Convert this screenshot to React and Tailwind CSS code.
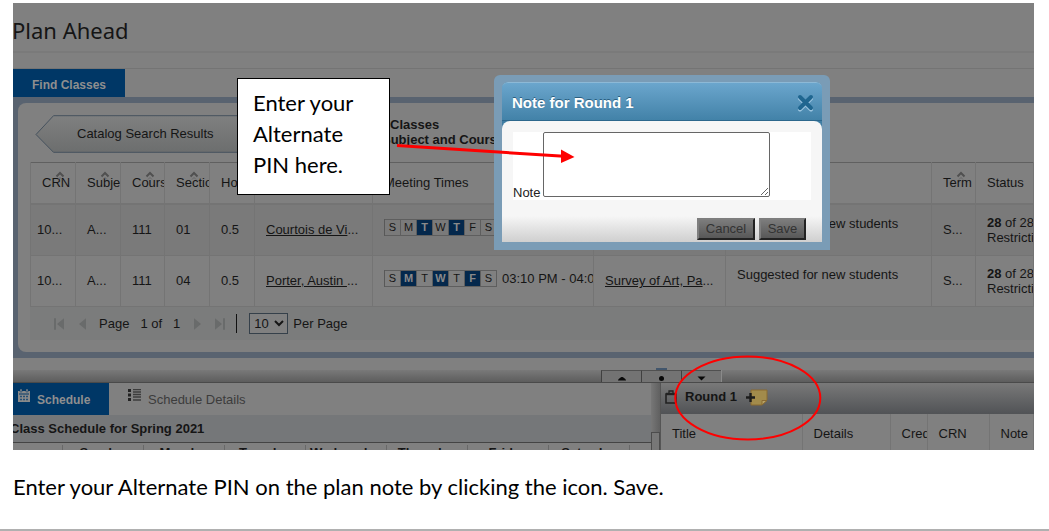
import React from "react";

const COLUMNS = [
  { name: "CRN", sort: true },
  { name: "Subject", sort: true },
  { name: "Course", sort: true },
  { name: "Section", sort: true },
  { name: "Hours" },
  { name: "Instructor" },
  { name: "Meeting Times" },
  { name: "Title" },
  { name: "Attribute" },
  { name: "Term", sort: true },
  { name: "Status" },
];

const CLASSES = [
  { section: "01", who: "Courtois de Vi", days: [2, 4], time: "", title: "Survey of Art, Pa" },
  { section: "04", who: "Porter, Austin ", days: [1, 3, 5], time: "03:10 PM - 04:00 PM", title: "Survey of Art, Pa" },
];

const WEEK = ["Sunday", "Monday", "Tuesday", "Wednesday", "Thursday", "Friday", "Saturday"];

function Caret() {
  return (
    <svg className="absolute left-6 top-2 h-[9px] w-[10px]" viewBox="0 0 10 9" fill="none" stroke="#505050" strokeWidth="2" aria-hidden="true">
      <path d="M1.500 5.500 5 2 8.500 5.500" />
      <path d="M3 8.500 5 6.500 7 8.500" stroke="#666" strokeWidth="1" />
    </svg>
  );
}

function Days({ active }) {
  return (
    <span className="inline-flex h-[17px] shrink-0 border-l border-[#585858] text-[11px] leading-[15px]">
      {["S", "M", "T", "W", "T", "F", "S"].map((d, i) => (
        <span
          key={i}
          className={
            active.includes(i)
              ? "w-4 border-y border-r border-[#5e5e5e] bg-[#04284c] text-center font-bold text-[#8a8a8a]"
              : "w-4 border-y border-r border-[#5e5e5e] text-center"
          }
        >
          {d}
        </span>
      ))}
    </span>
  );
}

function PagerButton({ label, children }) {
  return (
    <button type="button" aria-label={label} className="flex h-4 w-3 items-center justify-center">
      <svg className="h-[14px] w-3" viewBox="0 0 12 12" preserveAspectRatio="none" fill="#696b6b" aria-hidden="true">{children}</svg>
    </button>
  );
}

function Search() {
  return (
    <section className="bg-[#596370] py-[6px] pl-[5px]">
      <div className="rounded-l-lg bg-[#808080] pb-3 pl-3 pt-3">
        <div className="flex h-[47px] items-start">
          <button type="button" className="relative ml-[5px] flex h-[38px] w-[218px] items-center pl-[42px]">
            <svg className="absolute inset-0 h-full w-full" viewBox="0 0 218 38" aria-hidden="true">
              <defs>
                <linearGradient id="back" x1="0" y1="0" x2="0" y2="1">
                  <stop offset="0" stopColor="#7f8080" />
                  <stop offset="1" stopColor="#6c6e6e" />
                </linearGradient>
              </defs>
              <path d="M1 19.500 18.500.7H217V37.300H18.500z" fill="url(#back)" stroke="#46525e" />
            </svg>
            <span className="relative">Catalog Search Results</span>
          </button>
          <p className="ml-[129px] mt-[2px] whitespace-nowrap font-bold leading-[15px]">
            <span className="pl-2">Classes</span>
            <br />
            Subject and Course
          </p>
        </div>
        <table className="w-full table-fixed border-collapse whitespace-nowrap border-t border-[#606060]">
          <colgroup>
            <col className="w-[45px]" />
            <col className="w-[45px]" />
            <col className="w-[44px]" />
            <col className="w-[45px]" />
            <col className="w-[45px]" />
            <col className="w-[118px]" />
            <col className="w-[221px]" />
            <col className="w-[132px]" />
            <col className="w-[206px]" />
            <col className="w-[44px]" />
            <col />
          </colgroup>
          <thead>
            <tr className="h-[41px] border-b-2 border-[#747474]">
              {COLUMNS.map((c) => (
                <th key={c.name} className="overflow-hidden border-x border-[#747474] p-0 text-left font-normal">
                  <div className="relative flex h-[39px] items-center overflow-hidden pl-[11px]">
                    {c.name}
                    {c.sort && <Caret />}
                  </div>
                </th>
              ))}
            </tr>
          </thead>
          <tbody>
            {CLASSES.map((c, i) => (
              <tr
                key={c.section}
                className={
                  i === 0
                    ? "h-[52px] border-b border-[#747474] bg-[#7a7a7a] *:border-x *:border-[#747474] *:p-0 *:pl-[11px]"
                    : "h-[51px] border-b border-[#747474] *:border-x *:border-[#747474] *:p-0 *:pl-[11px]"
                }
              >
                <td><span className="-ml-[5px]">10...</span></td>
                <td>A...</td>
                <td>111</td>
                <td>{c.section}</td>
                <td>0.5</td>
                <td><a href="#instructor" className="underline">{c.who}</a>...</td>
                <td className="align-top">
                  <div className="flex gap-[5px] overflow-hidden pt-[14px] leading-[17px]">
                    <Days active={c.days} />
                    <span>{c.time}</span>
                  </div>
                </td>
                <td><a href="#course" className="underline">{c.title}</a>...</td>
                <td className="align-top leading-[15px]">
                  <div className="pt-[11px]">Suggested for new students</div>
                </td>
                <td>S...</td>
                <td className="overflow-hidden leading-[15px]">
                  <b>28</b> of 28 seats<br />Restrictions apply
                </td>
              </tr>
            ))}
          </tbody>
        </table>
        <div className="flex h-[33px] items-center bg-[#7b7c7c] pl-[23px]">
          <PagerButton label="First page"><path d="M1 1h2v10H1zM11 1v10L4 6z" /></PagerButton>
          <span className="w-3" />
          <PagerButton label="Previous page"><path d="M9 1v10L2 6z" /></PagerButton>
          <span className="ml-[10px]">Page</span>
          <span className="ml-[11px]">1 of</span>
          <span className="ml-[11px]">1</span>
          <span className="w-3" />
          <PagerButton label="Next page"><path d="M2 1v10l7-5z" /></PagerButton>
          <span className="w-[10px]" />
          <PagerButton label="Last page"><path d="M1 1v10l7-5zM9 1h2v10H9z" /></PagerButton>
          <span className="ml-[10px] h-[19px] w-px bg-[#111]" />
          <select id="per-page" defaultValue="10" className="ml-3 h-[21px] w-[39px] border border-[#35404a] bg-[#808080]">
            <option>10</option>
            <option>20</option>
          </select>
          <label htmlFor="per-page" className="ml-[5px]">Per Page</label>
        </div>
      </div>
    </section>
  );
}

function SplitButton({ label, children }) {
  return (
    <button type="button" aria-label={label} className="h-3 w-10 overflow-hidden border-l border-t border-l-[#404040] border-t-[#505050] bg-[#737373]">
      <svg className="mx-auto h-3 w-10" viewBox="0 0 40 12" fill="#080808" aria-hidden="true">{children}</svg>
    </button>
  );
}

function Splitter() {
  return (
    <div className="flex h-[13px] border-b border-[#4a4a4a] bg-linear-to-b from-[#797979] to-[#5d5d5d]">
      <div className="ml-[588px] flex border-r border-[#8a8a8a]">
        <SplitButton label="Collapse up"><path d="M16 9.500c0-1.500 3-3.500 4-3.500s4 2 4 3.500z" /></SplitButton>
        <SplitButton label="Reset split"><circle cx="19.500" cy="7.500" r="2.500" /></SplitButton>
        <SplitButton label="Collapse down"><path d="M15.500 5.500h8L19.500 9.500z" /></SplitButton>
      </div>
    </div>
  );
}

function Schedule() {
  return (
    <section className="w-[638px] shrink-0">
      <div className="flex h-8">
        <button type="button" className="flex w-24 bg-[#003766] pl-[5px] pt-[6px] text-[12px] font-bold text-[#8f8f8f]">
          <svg className="h-[13px] w-3" viewBox="0 0 12 13" aria-hidden="true">
            <path d="M0 2h12v11H0z" fill="#8a8a8a" />
            <path d="M2 0h2v3H2zM8 0h2v3H8z" fill="#8a8a8a" stroke="#003766" strokeWidth=".5" />
            <path d="M1 5h10" stroke="#003766" />
            <path d="M2 7.500h2M5 7.500h2M8 7.500h2M2 10.500h2M5 10.500h2M8 10.500h2" stroke="#254f76" strokeWidth="1.500" />
          </svg>
          <span className="ml-[7px] mt-[3px]">Schedule</span>
        </button>
        <button type="button" className="flex pl-[19px] pt-[6px] text-[#3c3c3c]">
          <svg className="h-3 w-[13px]" viewBox="0 0 13 12" aria-hidden="true">
            <path d="M0 0h3v3H0zM0 4.500h3v3H0zM0 9h3v3H0z" fill="#222" />
            <path d="M5 .5h8M5 3h8M5 5.500h8M5 8h8M5 11h8" stroke="#3c3c3c" strokeWidth="1.300" />
          </svg>
          <span className="ml-[7px] mt-[3px]">Schedule Details</span>
        </button>
      </div>
      <h2 className="-ml-[3px] flex h-7 items-center border-b border-[#444] bg-[#757779] font-bold">
        Class Schedule for Spring 2021
      </h2>
      <div className="mt-[2px] flex h-[5px] overflow-hidden text-center font-bold leading-[15px]">
        <span className="w-[49px] shrink-0" />
        {WEEK.map((d) => (
          <span key={d} className="w-[81px] shrink-0 border-l border-[#686868]">{d}</span>
        ))}
        <span className="w-4 border-l border-[#686868]" />
      </div>
    </section>
  );
}

function Plan() {
  return (
    <section className="min-w-0 flex-1">
      <div className="flex h-[31px] items-center bg-linear-to-b from-[#797979] to-[#515356] pb-[3px] pl-1">
        <svg className="h-[14px] w-3" viewBox="0 0 12 14" fill="none" stroke="#222" aria-hidden="true">
          <path d="M1 4h10v9H1z" strokeWidth="1.600" />
          <path d="M1 4h10" strokeWidth="2.400" />
          <path d="M4 3V1h4v2" strokeWidth="1.300" />
        </svg>
        <h2 className="ml-2 font-bold">Round 1</h2>
        <button type="button" aria-label="Add note" className="ml-[9px]">
          <svg className="h-[17px] w-[22px]" viewBox="0 0 22 17" aria-hidden="true">
            <path d="M5 1h16v10l-5 5H5z" fill="#a28b4b" stroke="#8a6a31" />
            <path d="M16 16v-4.500h5z" fill="#b7a266" stroke="#8a6a31" />
            <path d="M4.500 4v9M0 8.500h9" stroke="#1c1c1c" strokeWidth="2.400" />
          </svg>
        </button>
      </div>
      <div className="h-9 overflow-hidden">
        <table className="h-10 w-full table-fixed whitespace-nowrap text-left">
          <colgroup>
            <col className="w-[141px]" />
            <col className="w-[88px]" />
            <col className="w-[37px]" />
            <col className="w-[62px]" />
            <col />
          </colgroup>
          <thead>
            <tr className="*:overflow-hidden *:border-r *:border-[#747474] *:p-0 *:pl-[11px] *:font-normal">
              <th>Title</th>
              <th>Details</th>
              <th>Credits</th>
              <th>CRN</th>
              <th>Note</th>
            </tr>
          </thead>
        </table>
      </div>
    </section>
  );
}

function NoteDialog() {
  return (
    <div role="dialog" aria-labelledby="note-title" className="absolute left-[494px] top-[75px] w-[336px] rounded-t-md bg-[#7a9cb6] px-2 pb-2 pt-[7px]">
      <div className="rounded-t-md bg-[#3f7da3]">
        <div className="flex h-[39px] items-center justify-between rounded-t-md border-b border-t border-b-[#2c678c] border-t-[#8db9d6] bg-linear-to-b from-[#6ba6cd] to-[#4282a8] pl-[10px] pr-2 pt-[2px]">
          <h2 id="note-title" className="text-[15px] font-bold text-white [text-shadow:0_-1px_0_#2b5f80]">Note for Round 1</h2>
          <button type="button" aria-label="Close">
            <svg className="h-[18px] w-[17px]" viewBox="0 0 17 18" fill="none" strokeLinecap="round" strokeWidth="4" aria-hidden="true">
              <path d="m3 4.500 11 11M14 4.500l-11 11" stroke="#9bc4df" />
              <path d="m3 3 11 11M14 3 3 14" stroke="#1f6690" />
            </svg>
          </button>
        </div>
        <div className="rounded-t-lg bg-[#f6f6f6] pt-[11px]">
          <div className="mx-[11px] flex h-[68px] items-start bg-white">
            <label htmlFor="note" className="mt-[53px] w-[30px] text-[#222]">Note</label>
            <textarea id="note" className="h-[65px] w-[227px] rounded-[2px] border border-[#666] bg-white" />
          </div>
          <div className="mt-4 flex h-[26px] items-start justify-end gap-1 bg-linear-to-b from-[#f6f6f6] to-[#cfcfcf] pr-4 pt-[2px] text-[13px] text-[#333]">
            <button type="button" className="h-[22px] w-[58px] border-2 border-b-[#222] border-l-[#7e7e7e] border-r-[#222] border-t-[#7e7e7e] bg-linear-to-b from-[#7c7c7c] to-[#585858] leading-[18px]">Cancel</button>
            <button type="button" className="h-[22px] w-[47px] border-2 border-b-[#222] border-l-[#7e7e7e] border-r-[#222] border-t-[#7e7e7e] bg-linear-to-b from-[#7c7c7c] to-[#585858] leading-[18px]">Save</button>
          </div>
        </div>
      </div>
    </div>
  );
}

export default function App() {
  return (
    <main className="relative border-b-2 border-[#b0b0b0] bg-white pt-[3px] font-['Liberation_Sans',Arial,sans-serif] text-[13px] leading-4 text-[#151515]">
      <div className="ml-[13px] mr-[15px] overflow-hidden bg-[#808080]">
        <h1 className="-ml-px h-[50px] border-b-2 border-[#7a7a7a] pt-3 font-['Noto_Sans','Open_Sans',sans-serif] text-[22px] leading-[30px]">Plan Ahead</h1>
        <div className="mt-[15px] border-t border-[#747474]">
          <button type="button" className="block h-7 w-28 bg-[#003766] pt-1 text-[12px] font-bold text-[#8f8f8f]">Find Classes</button>
        </div>
        <Search />
        <div className="flex h-3 items-end pl-[643px]">
          <span className="h-[2px] w-[11px] bg-[#42566c]" />
        </div>
        <Splitter />
        <div className="flex h-[67px] overflow-hidden">
          <Schedule />
          <div className="w-[10px] shrink-0 border-r border-[#555] bg-linear-to-r from-[#777] to-[#606060] pt-[49px]">
            <button type="button" aria-label="Collapse left" className="flex h-6 w-[9px] border border-[#4c4c4c] bg-[#777]" />
          </div>
          <Plan />
        </div>
      </div>
      <NoteDialog />
      <p className="absolute left-[237px] top-[78px] w-[153px] border border-black bg-white px-[15px] pb-[14px] pt-2 font-['Lato',Calibri,sans-serif] text-[22px] leading-[31px] text-black">
        Enter your Alternate PIN here.
      </p>
      <svg className="pointer-events-none absolute left-[390px] top-[140px] h-[310px] w-[440px]" viewBox="390 140 440 310" fill="none" stroke="#fe0000" aria-hidden="true">
        <path d="M397 145.500 564 156.300" strokeWidth="3" />
        <path d="M561 149.500v13.500l13.500-6z" fill="#fe0000" stroke="none" />
        <ellipse cx="747.800" cy="398" rx="72.500" ry="41.500" strokeWidth="2" />
      </svg>
      <p className="ml-[13px] pb-[26px] pt-[21px] font-['Lato',Calibri,sans-serif] text-[22px] leading-[32px] text-black">
        Enter your Alternate PIN on the plan note by clicking the icon. Save.
      </p>
    </main>
  );
}
